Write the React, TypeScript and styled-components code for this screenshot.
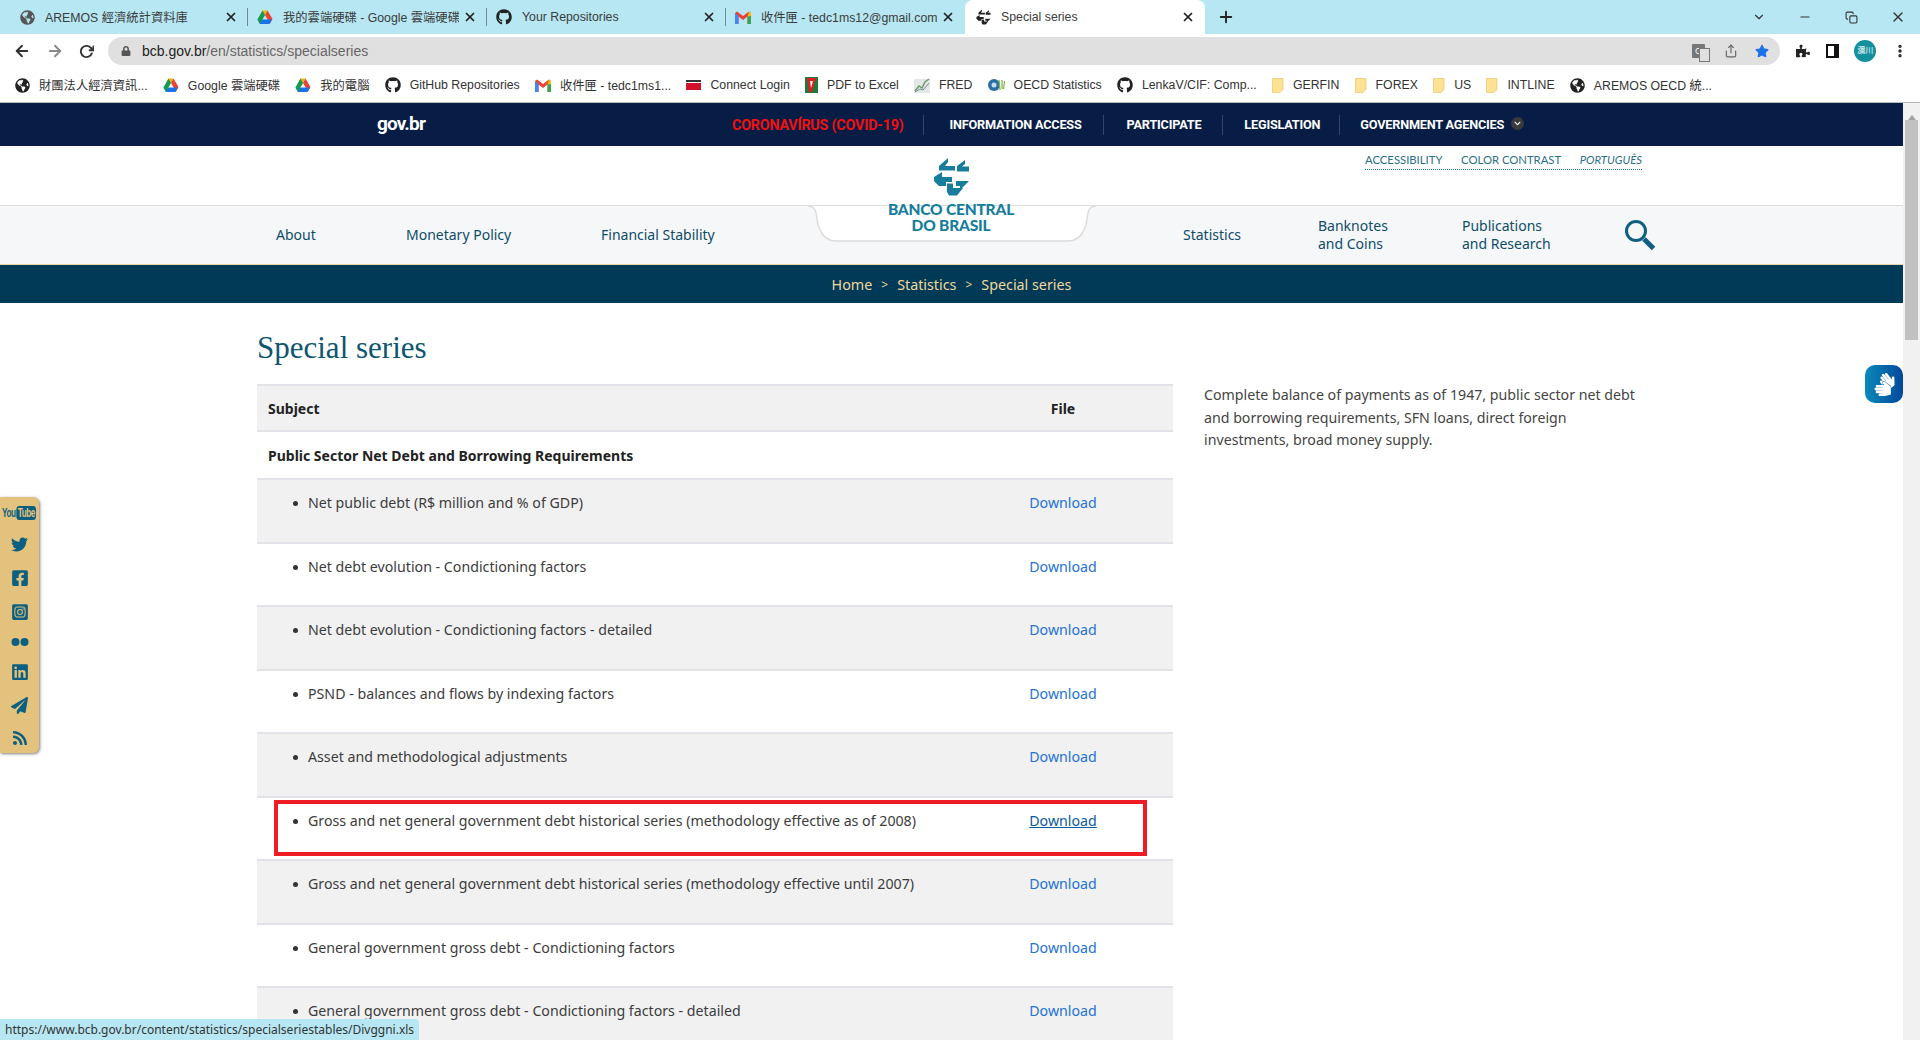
import styled, {createGlobalStyle} from 'styled-components';
import {
    FaChevronDown,
    FaFacebookSquare,
    FaGithub,
    FaGlobeAmericas,
    FaInstagramSquare,
    FaLinkedin,
    FaLock,
    FaPaperPlane,
    FaPuzzlePiece,
    FaRss,
    FaSignLanguage,
    FaStar,
    FaTwitter,
} from 'react-icons/fa';
import {FiArrowLeft, FiArrowRight, FiChevronDown, FiCopy, FiMinus, FiMoreVertical, FiPlus, FiRotateCw, FiShare, FiX} from 'react-icons/fi';

const GlobalStyle = createGlobalStyle`
    html, body {
        margin: 0;
        padding: 0;
        height: 1040px;
        overflow: hidden;
        background: #ffffff;
        font-family: 'Noto Sans', 'Noto Sans CJK TC', sans-serif;
    }
    * { box-sizing: border-box; }
`;

const UI_FONT = `'Liberation Sans', 'Noto Sans CJK TC', sans-serif`;
const SITE_FONT = `'Noto Sans', 'Open Sans', sans-serif`;

const DriveIcon = () => (
    <svg width="16" height="15" viewBox="0 0 16 15">
        <polygon points="5.5,0.5 10.500,0.500 6,8.500 1,8.500" fill="#f4b400" />
        <polygon points="10.500,0.500 15.500,9 13,13.500 8,5" fill="#ea4335" />
        <polygon points="0.500,9.500 15,9.500 12.500,14 3,14" fill="#1a73e8" />
        <polygon points="5.500,0.500 8,5 5,10 3,14 0.500,9.500" fill="#0f9d58" />
    </svg>
);

const GmailIcon = () => (
    <svg width="16" height="13" viewBox="0 0 16 13">
        <path d="M0 2v11h3.500V5.500L8 9l4.500-3.500V13H16V2l-2-1.500L8 5 2 .5z" fill="#ea4335" />
        <path d="M0 2v11h3.500V5z" fill="#4285f4" />
        <path d="M16 2v11h-3.500V5z" fill="#34a853" />
        <path d="M12.500 5.500L14 .5 16 2v3z" fill="#fbbc04" />
    </svg>
);

const BcbArrows = ({size, color}: {size: number; color: string}) => (
    <svg width={size} height={size * 39 / 37} viewBox="0 0 37 39" fill={color}>
        <path d="M6 9l9-8v4l-3 4h10v4.500H6z" />
        <path d="M24 9l8-6v4l-3 2.500h7v5H24z" />
        <path d="M1 20l8-5v5h10v5h-6v4H6l-5-5z" />
        <path d="M14 30v-3.500h6V31h10l-6 7.500h-8L14 35z" />
        <path d="M23 24h13l-9 9v-4h-4z" />
    </svg>
);

const FolderIcon = () => (
    <svg width="12" height="15" viewBox="0 0 12 15">
        <path d="M0.500 0.500h10.500v11l-3 3h-7.500z" fill="#fde293" stroke="#e9c766" strokeWidth="0.700" />
    </svg>
);

const PdfIcon = () => (
    <svg width="13" height="16" viewBox="0 0 13 16">
        <rect width="13" height="16" fill="#1c7a3c" />
        <path d="M2 1h9L7 15H4z" fill="#e31b23" />
        <path d="M5 4l3 0-2 7z" fill="#ffffff" />
    </svg>
);

const ConnectIcon = () => (
    <svg width="15" height="10" viewBox="0 0 15 10">
        <rect width="15" height="2" fill="#333" />
        <rect y="3" width="15" height="7" fill="#d2112a" />
    </svg>
);

const FredIcon = () => (
    <svg width="16" height="16" viewBox="0 0 16 16">
        <rect y="2" width="16" height="14" fill="#e3e8e6" />
        <path d="M1 14l4-5 3 2 3-6 4-3" fill="none" stroke="#6b9a70" strokeWidth="1.500" />
        <path d="M1 15l5-3 3 1 6-7" fill="none" stroke="#7d8b9c" strokeWidth="1" />
    </svg>
);

const OecdIcon = () => (
    <svg width="17" height="14" viewBox="0 0 17 14">
        <circle cx="6" cy="7" r="6" fill="#2a6ea6" />
        <circle cx="6" cy="7" r="2.500" fill="#c9dcea" />
        <path d="M11 2l1 10M14 2l0 9M16.500 3l-1 8" stroke="#7fb23c" strokeWidth="1.200" />
    </svg>
);

const tabs = [
    {title: 'AREMOS 經濟統計資料庫', icon: <FaGlobeAmericas size={15} color="#555" />},
    {title: '我的雲端硬碟 - Google 雲端硬碟', icon: <DriveIcon />},
    {title: 'Your Repositories', icon: <FaGithub size={16} color="#222" />},
    {title: '收件匣 - tedc1ms12@gmail.com', icon: <GmailIcon />},
];

const bookmarks = [
    {title: '財團法人經濟資訊...', icon: <FaGlobeAmericas size={15} color="#222" />},
    {title: 'Google 雲端硬碟', icon: <DriveIcon />},
    {title: '我的電腦', icon: <DriveIcon />},
    {title: 'GitHub Repositories', icon: <FaGithub size={16} color="#222" />},
    {title: '收件匣 - tedc1ms1...', icon: <GmailIcon />},
    {title: 'Connect Login', icon: <ConnectIcon />},
    {title: 'PDF to Excel', icon: <PdfIcon />},
    {title: 'FRED', icon: <FredIcon />},
    {title: 'OECD Statistics', icon: <OecdIcon />},
    {title: 'LenkaV/CIF: Comp...', icon: <FaGithub size={16} color="#222" />},
    {title: 'GERFIN', icon: <FolderIcon />},
    {title: 'FOREX', icon: <FolderIcon />},
    {title: 'US', icon: <FolderIcon />},
    {title: 'INTLINE', icon: <FolderIcon />},
    {title: 'AREMOS OECD 統...', icon: <FaGlobeAmericas size={15} color="#222" />},
];

const series = [
    'Net public debt (R$ million and % of GDP)',
    'Net debt evolution - Condictioning factors',
    'Net debt evolution - Condictioning factors - detailed',
    'PSND - balances and flows by indexing factors',
    'Asset and methodological adjustments',
    'Gross and net general government debt historical series (methodology effective as of 2008)',
    'Gross and net general government debt historical series (methodology effective until 2007)',
    'General government gross debt - Condictioning factors',
    'General government gross debt - Condictioning factors - detailed',
];

const App = () => {
    return (
        <Screen>
            <GlobalStyle />
            <TabStrip>
                {tabs.map(tab => (
                    <Tab key={tab.title}>
                        <TabIcon>{tab.icon}</TabIcon>
                        <TabTitle>{tab.title}</TabTitle>
                        <FiX size={14} strokeWidth={3} />
                    </Tab>
                ))}
                <ActiveTab>
                    <TabIcon><BcbArrows size={15} color="#222" /></TabIcon>
                    <TabTitle>Special series</TabTitle>
                    <FiX size={14} strokeWidth={3} />
                </ActiveTab>
                <NewTab><FiPlus size={18} strokeWidth={2.500} /></NewTab>
                <WindowControls>
                    <FiChevronDown size={14} />
                    <FiMinus size={14} />
                    <FiCopy size={13} />
                    <FiX size={16} />
                </WindowControls>
            </TabStrip>
            <Toolbar>
                <NavIcons>
                    <FiArrowLeft size={18} strokeWidth={2.500} />
                    <FiArrowRight size={18} strokeWidth={2.500} color="#8a8a8a" />
                    <FiRotateCw size={15} strokeWidth={3} />
                </NavIcons>
                <Omnibox>
                    <FaLock size={10} color="#555" />
                    <Url>bcb.gov.br<UrlPath>/en/statistics/specialseries</UrlPath></Url>
                    <OmniActions>
                        <TranslateBadge>G</TranslateBadge>
                        <FiShare size={14} color="#666" />
                        <FaStar size={14} color="#1a73e8" />
                    </OmniActions>
                </Omnibox>
                <ToolbarEnd>
                    <FaPuzzlePiece size={14} color="#222" />
                    <SidePanelIcon />
                    <Avatar>瀰川</Avatar>
                    <FiMoreVertical size={16} strokeWidth={3} />
                </ToolbarEnd>
            </Toolbar>
            <BookmarkBar>
                {bookmarks.map(mark => (
                    <Bookmark key={mark.title}>
                        {mark.icon}
                        <span>{mark.title}</span>
                    </Bookmark>
                ))}
            </BookmarkBar>
            <Viewport>
                <Page>
                    <GovBar>
                        <GovLogo>gov.br</GovLogo>
                        <GovMenu>
                            <GovItem $alert>CORONAVÍRUS (COVID-19)</GovItem>
                            <GovItem>INFORMATION ACCESS</GovItem>
                            <GovItem>PARTICIPATE</GovItem>
                            <GovItem>LEGISLATION</GovItem>
                            <GovItem>
                                GOVERNMENT AGENCIES
                                <GovChevron><FaChevronDown size={7} /></GovChevron>
                            </GovItem>
                        </GovMenu>
                    </GovBar>
                    <Masthead>
                        <AccessLinks>
                            <span>ACCESSIBILITY</span>
                            <span>COLOR CONTRAST</span>
                            <em>PORTUGUÊS</em>
                        </AccessLinks>
                    </Masthead>
                    <MainNav>
                        <NavGroup>
                            <NavLink $width={130}>About</NavLink>
                            <NavLink $width={195}>Monetary Policy</NavLink>
                            <NavLink>Financial Stability</NavLink>
                        </NavGroup>
                        <LogoTab>
                            <TabShape width="288" height="38" viewBox="0 0 288 38">
                                <path
                                    d="M0 1C8 1 8 8 9 14C10 22 14 36 28 36H260C274 36 278 22 279 14C280 8 280 1 288 1"
                                    fill="#ffffff"
                                    stroke="#dcdcdc"
                                    strokeWidth="1.500"
                                />
                            </TabShape>
                            <LogoMark><BcbArrows size={37} color="#177d9c" /></LogoMark>
                            <LogoText>BANCO CENTRAL<br />DO BRASIL</LogoText>
                        </LogoTab>
                        <NavGroupRight>
                            <NavLink $width={135}>Statistics</NavLink>
                            <NavLink $width={144}>Banknotes<br />and Coins</NavLink>
                            <NavLink $width={162}>Publications<br />and Research</NavLink>
                            <svg width="32" height="32" viewBox="0 0 32 32" fill="none" stroke="#0e5f80">
                                <circle cx="12" cy="12" r="9.500" strokeWidth="3" />
                                <path d="M20 20l9.500 9.500" strokeWidth="5" />
                            </svg>
                        </NavGroupRight>
                    </MainNav>
                    <Breadcrumb>
                        <span>Home</span><Sep>&gt;</Sep><span>Statistics</span><Sep>&gt;</Sep><span>Special series</span>
                    </Breadcrumb>
                    <Content>
                        <Heading>Special series</Heading>
                        <Columns>
                            <SeriesTable>
                                <thead>
                                    <tr>
                                        <HeadCell>Subject</HeadCell>
                                        <HeadFile>File</HeadFile>
                                    </tr>
                                </thead>
                                <tbody>
                                    <tr>
                                        <GroupCell colSpan={2}>Public Sector Net Debt and Borrowing Requirements</GroupCell>
                                    </tr>
                                    {series.map((name, index) => (
                                        <Row key={name} $shaded={index % 2 === 0}>
                                            <SubjectCell><Bullet>{name}</Bullet></SubjectCell>
                                            <FileCell><Download $hover={index === 5}>Download</Download></FileCell>
                                        </Row>
                                    ))}
                                </tbody>
                            </SeriesTable>
                            <Aside>
                                Complete balance of payments as of 1947, public sector net debt and borrowing
                                requirements, SFN loans, direct foreign investments, broad money supply.
                            </Aside>
                        </Columns>
                    </Content>
                </Page>
                <Scrollbar>
                    <ScrollArrow />
                    <ScrollThumb />
                </Scrollbar>
                <SocialBar>
                    <YoutubeMark>You<YoutubeBox>Tube</YoutubeBox></YoutubeMark>
                    <FaTwitter size={17} />
                    <FaFacebookSquare size={18} />
                    <FaInstagramSquare size={18} />
                    <svg width="18" height="10" viewBox="0 0 18 10" fill="currentColor">
                        <circle cx="4.500" cy="5" r="4" />
                        <circle cx="13.500" cy="5" r="4" />
                    </svg>
                    <FaLinkedin size={18} />
                    <FaPaperPlane size={17} />
                    <FaRss size={16} />
                </SocialBar>
                <SignButton><FaSignLanguage size={23} /></SignButton>
                <Highlight />
            </Viewport>
            <StatusBubble>https://www.bcb.gov.br/content/statistics/specialseriestables/Divggni.xls</StatusBubble>
        </Screen>
    );
};

export default App;

const Screen = styled.div`
    position: relative;
    width: 1920px;
    height: 1040px;
    overflow: hidden;
    display: flex;
    flex-direction: column;
`;

const TabStrip = styled.div`
    height: 34px;
    flex: none;
    display: flex;
    align-items: stretch;
    background: #b6e7f3;
    font-family: ${UI_FONT};
    font-size: 12.300px;
    color: #333;
`;

const Tab = styled.div`
    width: 240px;
    padding: 0 10px;
    margin-left: -1px;
    display: flex;
    align-items: center;
    gap: 10px;
    color: #3c3c3c;
    position: relative;

    &:first-child { margin-left: 0; padding-left: 19px; width: 248px; }

    & + &::before {
        content: '';
        position: absolute;
        left: 0;
        top: 8px;
        bottom: 8px;
        width: 1px;
        background: #6f8d94;
    }

    svg:last-child { flex: none; color: #222; margin-left: -6px; }
`;

const ActiveTab = styled(Tab)`
    width: 240px;
    margin-left: 0;
    background: #ffffff;
    border-radius: 8px 8px 0 0;

    &::before { display: none; }
    svg:last-child { margin-left: 0; }
`;

const TabIcon = styled.span`
    width: 16px;
    height: 16px;
    flex: none;
    display: flex;
    align-items: center;
    justify-content: center;

    svg:last-child { color: inherit; margin-left: 0; }
`;

const TabTitle = styled.span`
    flex: 1;
    min-width: 0;
    overflow: hidden;
    white-space: nowrap;
`;

const NewTab = styled.div`
    width: 36px;
    margin-left: 3px;
    display: flex;
    align-items: center;
    justify-content: center;
    color: #222;
`;

const WindowControls = styled.div`
    margin-left: auto;
    width: 168px;
    padding-right: 14px;
    display: flex;
    align-items: center;
    justify-content: space-between;
    color: #333;
`;

const Toolbar = styled.div`
    height: 34px;
    flex: none;
    display: flex;
    align-items: center;
    background: #ffffff;
    font-family: ${UI_FONT};
`;

const NavIcons = styled.div`
    width: 108px;
    padding: 0 14px 0 13px;
    display: flex;
    align-items: center;
    justify-content: space-between;
    color: #333;
`;

const Omnibox = styled.div`
    width: 1672px;
    height: 28px;
    padding: 0 11px 0 13px;
    display: flex;
    align-items: center;
    gap: 11px;
    border-radius: 14px;
    background: #e0e0e0;
    font-size: 14px;
`;

const Url = styled.span`
    color: #222;
`;

const UrlPath = styled.span`
    color: #666;
`;

const OmniActions = styled.div`
    margin-left: auto;
    display: flex;
    align-items: center;
    gap: 17px;
`;

const TranslateBadge = styled.span`
    position: relative;
    width: 13px;
    height: 14px;
    margin-right: 2px;
    border-radius: 1px;
    background: #777;
    color: #fff;
    font-size: 9px;
    line-height: 14px;
    text-align: center;

    &::after {
        content: '';
        position: absolute;
        left: 7px;
        top: 4px;
        width: 9px;
        height: 12px;
        border: 1px solid #777;
        background: #e0e0e0;
    }
`;

const ToolbarEnd = styled.div`
    flex: 1;
    padding: 0 12px 0 16px;
    display: flex;
    align-items: center;
    justify-content: space-between;
    color: #222;
`;

const SidePanelIcon = styled.span`
    width: 13px;
    height: 14px;
    border: 2px solid #111;
    border-right-width: 5px;
`;

const Avatar = styled.span`
    width: 22px;
    height: 22px;
    border-radius: 50%;
    background: #12909e;
    color: #fff;
    font-size: 8px;
    line-height: 22px;
    text-align: center;
`;

const BookmarkBar = styled.div`
    height: 35px;
    flex: none;
    padding-left: 15px;
    display: flex;
    align-items: center;
    gap: 15.200px;
    background: #ffffff;
    border-bottom: 1px solid #b9b9b9;
    font-family: ${UI_FONT};
    font-size: 12.300px;
    color: #333;
    white-space: nowrap;
`;

const Bookmark = styled.div`
    display: flex;
    align-items: center;
    gap: 9px;
`;

const Viewport = styled.div`
    position: relative;
    flex: 1;
    min-height: 0;
    display: flex;
    overflow: hidden;
`;

const Page = styled.div`
    flex: 1;
    min-width: 0;
    font-family: ${SITE_FONT};
`;

const GovBar = styled.div`
    height: 43px;
    padding-left: 377px;
    display: flex;
    align-items: center;
    background: #081d45;
    color: #ffffff;
`;

const GovLogo = styled.div`
    width: 355px;
    font-family: 'Roboto', sans-serif;
    font-weight: 700;
    font-size: 19px;
    letter-spacing: -0.800px;
    margin-top: -3px;
`;

const GovMenu = styled.div`
    display: flex;
    align-items: center;
`;

const GovItem = styled.div<{$alert?: boolean}>`
    height: 20px;
    padding: 0 23px;
    display: flex;
    align-items: center;
    gap: 7px;
    border-left: 1px solid #31456c;
    font-family: 'Roboto', sans-serif;
    font-size: 12.700px;
    font-weight: 700;
    letter-spacing: -0.200px;
    white-space: nowrap;
    color: ${({$alert}) => ($alert ? '#f01010' : '#ffffff')};

    &:first-child { border-left: 0; padding-left: 0; padding-right: 20px; font-size: 14.300px; }
    &:nth-child(2) { padding-left: 25px; padding-right: 21px; }
    &:nth-child(3) { padding-right: 21px; }
    &:nth-child(4) { padding-left: 21px; padding-right: 19px; }
    &:last-child { padding-left: 20px; }
`;

const GovChevron = styled.span`
    width: 13px;
    height: 13px;
    margin-top: -2px;
    border-radius: 50%;
    background: #3a3a3a;
    display: flex;
    align-items: center;
    justify-content: center;
`;

const Masthead = styled.div`
    height: 59px;
    padding: 7px 0 0 1365px;
    background: #ffffff;
`;

const AccessLinks = styled.div`
    width: 277px;
    height: 17px;
    display: flex;
    justify-content: space-between;
    border-bottom: 1px dotted #177d9c;
    font-family: 'Lato', sans-serif;
    font-size: 11.300px;
    line-height: 14px;
    color: #2a7086;
`;

const MainNav = styled.div`
    height: 60px;
    padding-left: 276px;
    display: flex;
    align-items: center;
    background: #f6f7f9;
    border-top: 1px solid #dcdcdc;
    border-bottom: 1px solid #e3d3a6;
`;

const NavGroup = styled.div`
    width: 538px;
    display: flex;
    align-items: center;
`;

const NavGroupRight = styled(NavGroup)`
    width: auto;
`;

const NavLink = styled.div<{$width?: number}>`
    width: ${({$width}) => ($width ? `${$width}px` : 'auto')};
    font-size: 14px;
    line-height: 18px;
    color: #0e4d67;
    white-space: nowrap;
`;

const LogoTab = styled.div`
    position: relative;
    width: 274px;
    height: 58px;
    margin-right: 95px;
    align-self: flex-start;
`;

const TabShape = styled.svg`
    position: absolute;
    left: -6px;
    top: -1px;
`;

const LogoMark = styled.div`
    position: absolute;
    left: 119px;
    top: -49px;
`;

const LogoText = styled.div`
    position: absolute;
    left: 0;
    right: 0;
    top: -5px;
    text-align: center;
    font-family: 'Lato', sans-serif;
    font-weight: 900;
    font-size: 15.500px;
    line-height: 16px;
    letter-spacing: -0.200px;
    color: #177d9c;
    white-space: nowrap;
`;

const Breadcrumb = styled.div`
    height: 38px;
    display: flex;
    align-items: center;
    justify-content: center;
    gap: 9px;
    background: #013a56;
    color: #f1d79d;
    font-size: 14.300px;
`;

const Sep = styled.span`
    font-size: 12px;
`;

const Content = styled.div`
    padding: 21px 0 0 257px;
`;

const Heading = styled.h1`
    margin: 0 0 12px;
    font-family: 'Liberation Serif', serif;
    font-size: 31px;
    font-weight: 400;
    line-height: 48px;
    color: #0e5570;
`;

const Columns = styled.div`
    display: flex;
    gap: 31px;
    align-items: flex-start;
`;

const SeriesTable = styled.table`
    width: 916px;
    flex: none;
    border-collapse: collapse;
    table-layout: fixed;
    font-size: 14.200px;
    color: #3c3c3c;
`;

const HeadCell = styled.th`
    height: 46px;
    padding: 0 11px;
    text-align: left;
    font-size: 14px;
    font-weight: 700;
    color: #222;
    background: #f1f1f2;
    border-top: 2px solid #e1e3e8;
    border-bottom: 2px solid #e1e3e8;
`;

const HeadFile = styled(HeadCell)`
    width: 220px;
    padding: 0;
    text-align: center;
`;

const GroupCell = styled.td`
    height: 48px;
    padding: 0 11px;
    font-size: 14px;
    font-weight: 700;
    color: #222;
    border-bottom: 2px solid #e1e3e8;
`;

const Row = styled.tr<{$shaded: boolean}>`
    height: 63.500px;
    background: ${({$shaded}) => ($shaded ? '#f1f1f2' : '#ffffff')};
    border-bottom: 2px solid #e1e3e8;
`;

const SubjectCell = styled.td`
    padding: 13px 0 0 51px;
    vertical-align: top;
`;

const Bullet = styled.span`
    position: relative;
    display: block;

    &::before {
        content: '';
        position: absolute;
        left: -15px;
        top: 8px;
        width: 5px;
        height: 5px;
        border-radius: 50%;
        background: #333;
    }
`;

const FileCell = styled.td`
    padding-top: 13px;
    vertical-align: top;
    text-align: center;
`;

const Download = styled.a<{$hover?: boolean}>`
    color: ${({$hover}) => ($hover ? '#0a5a9c' : '#2472d6')};
    text-decoration: ${({$hover}) => ($hover ? 'underline' : 'none')};
`;

const Aside = styled.p`
    width: 450px;
    margin: 0;
    font-size: 14.200px;
    line-height: 22.500px;
    color: #444;
`;

const Scrollbar = styled.div`
    width: 17px;
    flex: none;
    padding: 0 2px;
    background: #f1f1f1;
`;

const ScrollArrow = styled.div`
    height: 17px;
    margin: 0 auto;
    width: 0;
    border-left: 4px solid transparent;
    border-right: 4px solid transparent;
    border-bottom: 5px solid #a3a3a3;
    border-top: 6px solid transparent;
`;

const ScrollThumb = styled.div`
    height: 220px;
    background: #c1c1c1;
`;

const SocialBar = styled.div`
    position: absolute;
    left: 0;
    top: 394px;
    width: 39px;
    height: 256px;
    padding: 9px 0 7px;
    display: flex;
    flex-direction: column;
    align-items: center;
    justify-content: space-between;
    background: #e2c27c;
    border-radius: 0 6px 6px 0;
    box-shadow: 1px 1px 3px rgba(0, 0, 0, 0.500);
    color: #0d5f80;
`;

const YoutubeMark = styled.div`
    display: flex;
    align-items: center;
    gap: 1px;
    font-family: 'Liberation Sans', sans-serif;
    font-size: 12px;
    font-weight: 700;
    letter-spacing: -0.600px;
    line-height: 14px;
    white-space: nowrap;
    transform: scaleX(0.680);
`;

const YoutubeBox = styled.span`
    padding: 0 2px;
    border-radius: 4px;
    background: #0d5f80;
    color: #e2c27c;
`;

const SignButton = styled.div`
    position: absolute;
    right: 17px;
    top: 262px;
    width: 38px;
    height: 38px;
    display: flex;
    align-items: center;
    justify-content: center;
    border-radius: 10px;
    background: linear-gradient(90deg, #0a8abb, #02479b);
    color: #ffffff;
`;

const Highlight = styled.div`
    position: absolute;
    left: 274px;
    top: 697px;
    width: 873px;
    height: 56px;
    border: 4px solid #ee1c25;
`;

const StatusBubble = styled.div`
    position: absolute;
    left: 0;
    bottom: 0;
    height: 21px;
    padding: 0 5px;
    background: #b6e7f3;
    border-radius: 0 4px 0 0;
    font-family: ${SITE_FONT};
    font-size: 12px;
    line-height: 21px;
    color: #333;
`;
